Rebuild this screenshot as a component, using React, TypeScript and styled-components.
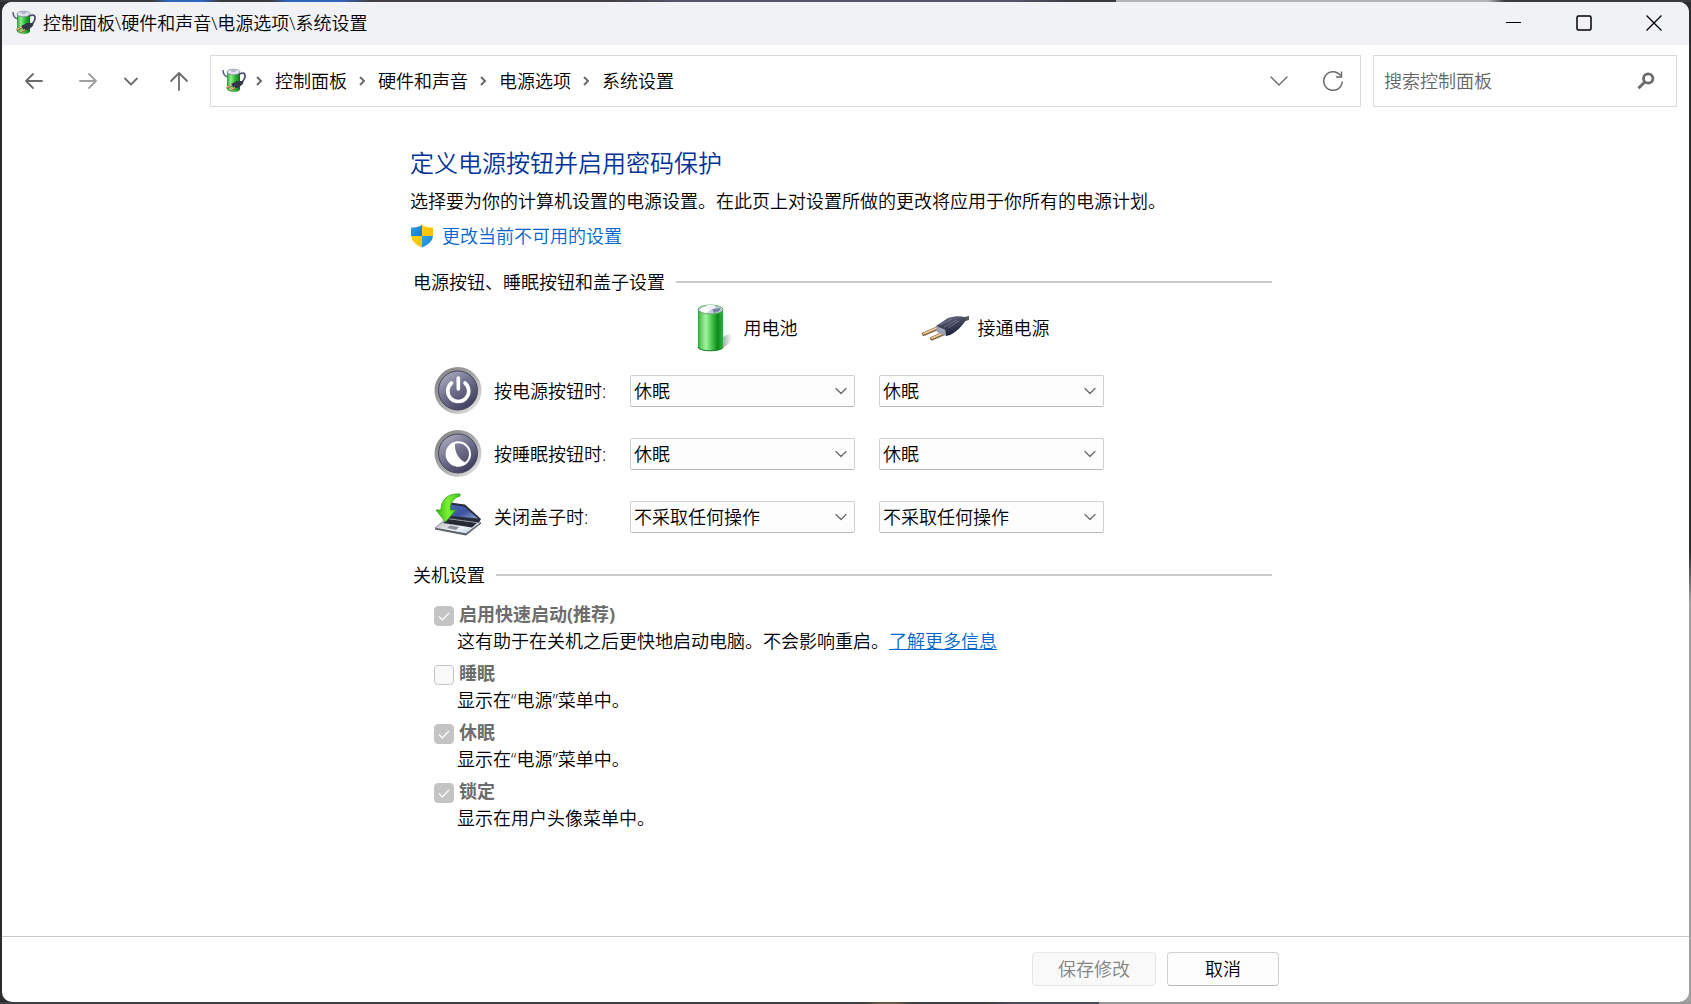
import React from "react";
import styled, { createGlobalStyle } from "styled-components";

const GlobalStyle = createGlobalStyle`
  *, *::before, *::after { box-sizing: border-box; }
  body {
    margin: 0;
    color: #000;
    font-family: "Open Sans", "Noto Sans CJK SC", sans-serif;
    font-size: 18px;
    font-weight: 350;
    line-height: 24px;
  }
  button, input, select { font: inherit; color: inherit; margin: 0; }
  h1, h2, p { margin: 0; font-weight: inherit; }
  svg { display: block; flex: none; }
`;

const Desktop = styled.div`
  display: flex;
  min-height: 100vh;
  padding: 2px;
  background:
    linear-gradient(90deg, #3a3b3d 0 9%, #2f65c0 10% 12%, #3a3b3d 13% 16%, #2f65c0 17% 20%, #443f42 22% 36%, #54546c 40% 60%, #3a3b3d 64% 66%, #b4b4b4 66% 88%, #3a3b3d 89%) top / 100% 2px no-repeat,
    linear-gradient(90deg, #3c3d3e 0 51%, #6a5846 52% 53%, #3c3d3e 54% 58%, #4a4c60 60% 65%, #989898 65%) bottom / 100% 2px no-repeat,
    linear-gradient(180deg, #2b2c2e 0 55%, #a0a0a0 60%) right / 16px 100% no-repeat,
    #2b2c2e;
`;

const Window = styled.div`
  flex: 1;
  min-width: 0;
  display: flex;
  flex-direction: column;
  overflow: hidden;
  border-radius: 10px;
  background: #fff;
`;

const TitleBar = styled.header`
  display: flex;
  align-items: center;
  height: 43px;
  padding: 0 0 2px 10px;
  background: #f1f2f5;
`;

const WindowTitle = styled.span`
  flex: 1;
  margin-left: 6px;
  line-height: 24px;
`;

const CaptionButton = styled.button`
  display: grid;
  place-items: center;
  width: 70px;
  height: 41px;
  padding: 0;
  border: 0;
  background: transparent;
`;

const NavBar = styled.nav`
  display: flex;
  align-items: center;
  padding: 10px 12px 0 8px;
`;

const NavButtons = styled.div`
  display: flex;
  gap: 6px;
  margin-right: 2px;
  align-items: center;
`;

const IconButton = styled.button<{ $w: number }>`
  display: grid;
  place-items: center;
  flex: none;
  width: ${(p) => p.$w}px;
  height: 40px;
  padding: 0;
  border: 0;
  background: transparent;
  color: #6b6b6b;
  &:disabled { color: #a0a0a0; }
`;

const AddressBar = styled.div`
  flex: 1;
  display: flex;
  align-items: center;
  height: 52px;
  padding: 0 0 0 11px;
  border: 1px solid #d9d9d9;
`;

const Crumbs = styled.ol`
  flex: 1;
  display: flex;
  margin: 0;
  padding: 0;
  list-style: none;
`;

const Crumb = styled.li`
  display: flex;
  align-items: center;
  gap: 12px;
  margin-left: 9px;
  & + & { margin-left: 12px; }
`;

const CrumbLink = styled.a`
  color: #000;
  text-decoration: none;
`;

const SearchBox = styled.div`
  display: flex;
  align-items: center;
  width: 304px;
  height: 52px;
  margin-left: 12px;
  padding: 0 8px 0 10px;
  border: 1px solid #d9d9d9;
`;

const SearchInput = styled.input`
  flex: 1;
  min-width: 0;
  padding: 0;
  border: 0;
  outline: 0;
  background: transparent;
  &::placeholder { color: #666; opacity: 1; }
`;

const Main = styled.main`
  flex: 1;
  width: 100%;
  max-width: 871px;
  margin: 0 auto;
  padding: 40px 9px 24px 0;
`;

const Heading = styled.h1`
  color: #003399;
  font-size: 24px;
  line-height: 32px;
`;

const Intro = styled.p`
  margin-top: 10px;
`;

const AdminLink = styled.a`
  display: flex;
  align-items: center;
  gap: 8px;
  width: fit-content;
  margin-top: 11px;
  color: #0066cc;
  text-decoration: none;
`;

const Section = styled.section`
  margin-top: 22px;
`;

const SectionTitle = styled.h2`
  display: flex;
  align-items: center;
  gap: 11px;
  padding-left: 3px;
  font-size: 18px;
  line-height: 24px;
  &::after {
    content: "";
    flex: 1;
    height: 2px;
    background: #c9c9c9;
  }
`;

const SourceHeader = styled.div`
  display: grid;
  grid-template-columns: 225px 225px;
  column-gap: 18px;
  margin: 10px 0 15px;
  padding-left: 220px;
`;

const Source = styled.div`
  display: flex;
  align-items: center;
  justify-content: center;
  gap: 8px;
`;

const ActionRows = styled.div`
  display: grid;
  row-gap: 15px;
  padding-left: 24px;
`;

const ActionRow = styled.div`
  display: grid;
  grid-template-columns: 48px 124px 225px 225px;
  column-gap: 12px;
  align-items: center;
`;

const SelectWrap = styled.div`
  display: grid;
  align-items: center;
  & > * { grid-area: 1 / 1; }
  & > svg { justify-self: end; margin-right: 8px; pointer-events: none; }
  & + & { margin-left: 12px; margin-right: -12px; }
`;

const Select = styled.select`
  appearance: none;
  width: 100%;
  height: 32px;
  padding: 0 28px 0 3px;
  border: 1px solid #d0d0d0;
  border-bottom-color: #b8b8b8;
  border-radius: 2px;
  background: #fdfdfd;
`;

const Options = styled.div`
  display: grid;
  row-gap: 8px;
  margin-top: 15px;
  padding-left: 24px;
`;

const OptionLine = styled.div`
  display: flex;
  align-items: flex-end;
  gap: 5px;
`;

const OptionLabel = styled.label`
  color: #6d6d6d;
  font-weight: 700;
`;

const OptionText = styled.p`
  margin-top: 3px;
  padding-left: 23px;
`;

const InlineLink = styled.a`
  color: #0066cc;
  text-decoration: underline;
`;

const CheckWrap = styled.span`
  display: grid;
  place-items: center;
  width: 20px;
  height: 20px;
  & > * { grid-area: 1 / 1; }
`;

const CheckInput = styled.input`
  appearance: none;
  width: 20px;
  height: 20px;
  border: 1px solid #c4c4c4;
  border-radius: 4px;
  background: #f9f9f9;
  &:checked { background: #c4c4c4; }
`;

const Footer = styled.footer`
  padding: 15px 0 16px;
  border-top: 1px solid #c8c8c8;
`;

const FooterInner = styled.div`
  display: flex;
  justify-content: flex-end;
  gap: 11px;
  width: 100%;
  max-width: 871px;
  margin: 0 auto;
  padding-right: 2px;
`;

const DialogButton = styled.button<{ $w: number }>`
  width: ${(p) => p.$w}px;
  height: 34px;
  padding: 0;
  border: 1px solid #d0d0d0;
  border-bottom-color: #b8b8b8;
  border-radius: 4px;
  background: #fdfdfd;
  &:disabled {
    border-color: #e6e6e6;
    background: #f9f9f9;
    color: #838383;
  }
`;

const PowerOptionsIcon = ({ id }: { id: string }) => (
  <svg width="25" height="26" viewBox="0 0 25 26" aria-hidden="true">
    <defs>
      <linearGradient id={id}>
        <stop offset="0" stopColor="#2f9a3c" />
        <stop offset=".3" stopColor="#8df08a" />
        <stop offset=".6" stopColor="#35bb3c" />
        <stop offset="1" stopColor="#0c7018" />
      </linearGradient>
    </defs>
    <path d="M18 6c3-2 5.500-1 5 3-.4 3-3 4-4 8" fill="none" stroke="#3f4568" strokeWidth="1.700" />
    <path d="M1 2c0 4 1 6 5 7" fill="none" stroke="#596079" strokeWidth="1.500" />
    <path d="M5 4v17c0 4 13 4 13 0V4z" fill={`url(#${id})`} />
    <ellipse cx="11.500" cy="4" rx="6.500" ry="2.800" fill="#dfe3ee" stroke="#77809a" strokeWidth=".7" />
    <ellipse cx="11.500" cy="3" rx="2.500" ry="1.200" fill="#b4b8cc" />
    <path d="M9 16l6-3 5 0 1.500 2-4.500 4.500-5 1z" fill="#34364a" />
    <path d="M4.500 20l5.500-2.500M8 22.500l5-2.500" stroke="#8b6736" strokeWidth="2.400" />
    <path d="M4.500 19.500L10 17M8 22l5-2.500" stroke="#ecd18c" strokeWidth="1" />
  </svg>
);

const CrumbSeparator = () => (
  <svg width="7" height="10" viewBox="0 0 7 10" fill="none" stroke="#6b6b6b" strokeWidth="2" aria-hidden="true">
    <path d="M1 1l4 4-4 4" />
  </svg>
);

const ArrowIcon = ({ d }: { d: string }) => (
  <svg width="20" height="20" viewBox="0 0 20 20" fill="none" stroke="currentColor" strokeWidth="1.800" strokeLinecap="round" strokeLinejoin="round" aria-hidden="true">
    <path d={d} />
  </svg>
);

const ShieldIcon = () => (
  <svg width="24" height="24" viewBox="0 0 24 24" aria-hidden="true">
    <defs>
      <clipPath id="shield">
        <path d="M12 1c3 2 7 2.500 11 2.500V11c0 6-5 10-11 12.500C6 21 1 17 1 11V3.500C5 3.500 9 3 12 1z" />
      </clipPath>
      <linearGradient id="shieldBlue" x1="0" y1="0" x2="1" y2="1">
        <stop offset="0" stopColor="#35a8e0" />
        <stop offset="1" stopColor="#0879d0" />
      </linearGradient>
      <linearGradient id="shieldGold" x1="0" y1="0" x2="1" y2="1">
        <stop offset="0" stopColor="#ffd400" />
        <stop offset="1" stopColor="#fdb913" />
      </linearGradient>
    </defs>
    <g clipPath="url(#shield)">
      <path d="M0 0h12v12H0z" fill="url(#shieldBlue)" />
      <path d="M12 0h12v12H12z" fill="url(#shieldGold)" />
      <path d="M0 12h12v12H0z" fill="url(#shieldGold)" />
      <path d="M12 12h12v12H12z" fill="url(#shieldBlue)" />
    </g>
  </svg>
);

const BatteryIcon = () => (
  <svg width="48" height="48" viewBox="0 0 48 48" aria-hidden="true">
    <defs>
      <linearGradient id="cell">
        <stop offset="0" stopColor="#2da338" />
        <stop offset=".12" stopColor="#5fd467" />
        <stop offset=".32" stopColor="#a4f3a2" />
        <stop offset=".52" stopColor="#52cf56" />
        <stop offset=".78" stopColor="#0d8a1c" />
        <stop offset="1" stopColor="#2fb038" />
      </linearGradient>
      <linearGradient id="cellShade">
        <stop offset="0" stopColor="#8c8c8c" />
        <stop offset="1" stopColor="#fff" />
      </linearGradient>
    </defs>
    <path d="M34 34c6-5 11-4 10 0-1 4-5 8-10 10z" fill="url(#cellShade)" opacity=".8" />
    <path d="M10 5v38c0 5 25 5 25 0V5z" fill="url(#cell)" />
    <path d="M10 43c0 5 25 5 25 0" fill="none" stroke="#117a1d" strokeWidth="1" />
    <ellipse cx="22.500" cy="5.500" rx="12.500" ry="4.500" fill="#c9cde0" stroke="#55b45d" strokeWidth="1" />
    <path d="M12 6c3-4 8-4 11-1l-4 4c-3 0-6-1-7-3z" fill="#fff" />
    <path d="M24 5l8-1c2 2-2 4-6 5z" fill="#7d83a5" />
    <ellipse cx="22.500" cy="3" rx="5" ry="2.300" fill="#f1f1f8" />
  </svg>
);

const PlugIcon = () => (
  <svg width="48" height="26" viewBox="0 0 48 26" aria-hidden="true">
    <defs>
      <linearGradient id="plugBody" x1="0" y1="0" x2=".4" y2="1">
        <stop offset="0" stopColor="#767b92" />
        <stop offset=".5" stopColor="#40435a" />
        <stop offset="1" stopColor="#20223a" />
      </linearGradient>
    </defs>
    <path d="M38 3l9-2v4l-7 2z" fill="#555" />
    <path d="M2 19l14-6M10 23.500l14-6" stroke="#8b6740" strokeWidth="4" strokeLinecap="round" />
    <path d="M2 18.500l14-6M10 23l14-6" stroke="#edcfa2" strokeWidth="1.800" strokeLinecap="round" />
    <path d="M14 11L26 3c6-2 12-2 17-1l1 3c-4 6-8 11-16 15l-4 1-1-6z" fill="url(#plugBody)" />
    <path d="M14 11l9 4 1 6-9-4z" fill="#9da1b8" />
    <path d="M18 10l12-6M22 12l13-7M26 13l11-7" stroke="#858aa0" strokeWidth=".7" />
  </svg>
);

const RoundButton = ({ id, children }: { id: string; children: React.ReactNode }) => (
  <svg width="48" height="48" viewBox="0 0 48 48" aria-hidden="true">
    <defs>
      <linearGradient id={`${id}Ring`} x1="0" y1="0" x2="1" y2="1">
        <stop offset=".1" stopColor="#858585" />
        <stop offset=".5" stopColor="#a9a9a9" />
        <stop offset=".9" stopColor="#e0e0e0" />
      </linearGradient>
      <linearGradient id={`${id}Face`} x1=".1" y1="0" x2=".8" y2="1">
        <stop offset="0" stopColor="#b4b5c6" />
        <stop offset=".45" stopColor="#72738f" />
        <stop offset="1" stopColor="#3a385b" />
      </linearGradient>
    </defs>
    <circle cx="24" cy="23.500" r="23.500" fill={`url(#${id}Ring)`} />
    <circle cx="24" cy="23.500" r="19.500" fill={`url(#${id}Face)`} stroke="#43445c" strokeWidth="1" />
    {children}
  </svg>
);

const PowerButtonIcon = () => (
  <RoundButton id="power">
    <path d="M17.500 16a10.500 10.500 0 1 0 13.500 0M24.300 11v11" fill="none" stroke="#fff" strokeWidth="3.600" strokeLinecap="round" />
  </RoundButton>
);

const SleepButtonIcon = () => (
  <RoundButton id="sleep">
    <circle cx="24.300" cy="24" r="11.700" fill="none" stroke="#fff" strokeWidth="2" />
    <path d="M21 12.500C20 21 24 29 32 33A12 12 0 1 1 21 12.500z" fill="#fff" />
  </RoundButton>
);

const LidIcon = () => (
  <svg width="48" height="48" viewBox="0 0 48 48" aria-hidden="true">
    <defs>
      <linearGradient id="lid" x1="0" y1="0" x2="1" y2="1">
        <stop offset="0" stopColor="#4664b8" />
        <stop offset=".55" stopColor="#3d559f" />
        <stop offset="1" stopColor="#8fa3d6" />
      </linearGradient>
      <linearGradient id="deck" x1="0" y1="0" x2="1" y2="1">
        <stop offset="0" stopColor="#aeb4bc" />
        <stop offset=".6" stopColor="#edf1f5" />
        <stop offset="1" stopColor="#9fc0da" />
      </linearGradient>
      <linearGradient id="arrow">
        <stop offset="0" stopColor="#2bbb12" />
        <stop offset=".5" stopColor="#7df032" />
        <stop offset="1" stopColor="#3fc51c" />
      </linearGradient>
    </defs>
    <path d="M1 35l12-10 34 5-15 11z" fill="url(#deck)" stroke="#777d85" strokeWidth=".8" />
    <path d="M1 35v1.500L32 42.500l15-12V29L32 40.500z" fill="#555c66" />
    <path d="M9 30l5-4 29 4-5 4.500z" fill="#252a35" />
    <path d="M16 32.500l9 1.500-3 3-9-2z" fill="#8a8f98" />
    <path d="M12 9l19 2.500L47 26l-2 3.500L13 25z" fill="#272c3c" />
    <path d="M15 11.500l15 2L44 25.500 17 23z" fill="url(#lid)" />
    <path d="M26 1C14 0 7 7 7 17H2l9.500 12L22 17h-5.500C16 10 19 5 26 3z" fill="url(#arrow)" stroke="#2a9b16" strokeWidth=".8" />
  </svg>
);

const SelectChevron = () => (
  <svg width="12" height="8" viewBox="0 0 12 8" fill="none" stroke="#666" strokeWidth="1.200" strokeLinecap="round" strokeLinejoin="round" aria-hidden="true">
    <path d="M1 1.500l5 5 5-5" />
  </svg>
);

const choices = ["不采取任何操作", "睡眠", "休眠", "关机"];

const ActionSelect = ({ label, value, id }: { label: string; value: string; id?: string }) => (
  <SelectWrap>
    <Select id={id} aria-label={label} defaultValue={value}>
      {choices.map((c) => (
        <option key={c}>{c}</option>
      ))}
    </Select>
    <SelectChevron />
  </SelectWrap>
);

const actions = [
  { id: "press-power", label: "按电源按钮时:", value: "休眠", icon: <PowerButtonIcon /> },
  { id: "press-sleep", label: "按睡眠按钮时:", value: "休眠", icon: <SleepButtonIcon /> },
  { id: "close-lid", label: "关闭盖子时:", value: "不采取任何操作", icon: <LidIcon /> },
];

const shutdownOptions = [
  { id: "fast", label: "启用快速启动(推荐)", text: "这有助于在关机之后更快地启动电脑。不会影响重启。", link: "了解更多信息", on: true },
  { id: "sleep", label: "睡眠", text: "显示在“电源”菜单中。", on: false },
  { id: "hibernate", label: "休眠", text: "显示在“电源”菜单中。", on: true },
  { id: "lock", label: "锁定", text: "显示在用户头像菜单中。", on: true },
];

const path = ["控制面板", "硬件和声音", "电源选项", "系统设置"];

export default function App() {
  return (
    <Desktop>
      <GlobalStyle />
      <Window>
        <TitleBar>
          <PowerOptionsIcon id="titleCell" />
          <WindowTitle>{path.join("\\")}</WindowTitle>
          <CaptionButton aria-label="最小化">
            <svg width="16" height="16" stroke="#000" aria-hidden="true"><path d="M0 7.500h15" /></svg>
          </CaptionButton>
          <CaptionButton aria-label="最大化">
            <svg width="16" height="16" fill="none" stroke="#000" strokeWidth="1.500" aria-hidden="true"><rect x="1" y="1" width="14" height="14" rx="1.500" /></svg>
          </CaptionButton>
          <CaptionButton aria-label="关闭">
            <svg width="16" height="16" stroke="#000" strokeWidth="1.300" aria-hidden="true"><path d="M.5.500l15 15M15.500.500l-15 15" /></svg>
          </CaptionButton>
        </TitleBar>

        <NavBar>
          <NavButtons>
            <IconButton $w={48} aria-label="后退"><ArrowIcon d="M18 10H2M9 3L2 10l7 7" /></IconButton>
            <IconButton $w={48} aria-label="前进" disabled><ArrowIcon d="M2 10h16M11 3l7 7-7 7" /></IconButton>
            <IconButton $w={26} aria-label="最近浏览的位置"><ArrowIcon d="M4 7.500l6 6 6-6" /></IconButton>
            <IconButton $w={58} aria-label="上一级"><ArrowIcon d="M10 19V2M2 10l8-8 8 8" /></IconButton>
          </NavButtons>
          <AddressBar>
            <PowerOptionsIcon id="addressCell" />
            <Crumbs>
              {path.map((name) => (
                <Crumb key={name}>
                  <CrumbSeparator />
                  <CrumbLink href="#">{name}</CrumbLink>
                </Crumb>
              ))}
            </Crumbs>
            <IconButton $w={54} aria-label="以前的位置">
              <svg width="18" height="10" viewBox="0 0 18 10" fill="none" stroke="currentColor" strokeWidth="1.400" strokeLinecap="round" aria-hidden="true"><path d="M1 1l8 8 8-8" /></svg>
            </IconButton>
            <IconButton $w={54} aria-label="刷新">
              <svg width="22" height="22" viewBox="0 0 22 22" fill="none" stroke="currentColor" strokeWidth="1.500" aria-hidden="true"><path d="M18.500 5.500A9.300 9.300 0 1 0 20.300 11.500M19.500 1.500V7H14" /></svg>
            </IconButton>
          </AddressBar>
          <SearchBox>
            <SearchInput type="text" aria-label="搜索控制面板" placeholder="搜索控制面板" />
            <IconButton $w={44} aria-label="搜索">
              <svg width="18" height="18" viewBox="0 0 18 18" fill="none" stroke="currentColor" strokeWidth="2.800" aria-hidden="true"><circle cx="11.200" cy="6.500" r="4.700" /><path d="M7.800 10L1.500 16.200" strokeWidth="3" /></svg>
            </IconButton>
          </SearchBox>
        </NavBar>

        <Main>
          <Heading>定义电源按钮并启用密码保护</Heading>
          <Intro>选择要为你的计算机设置的电源设置。在此页上对设置所做的更改将应用于你所有的电源计划。</Intro>
          <AdminLink href="#"><ShieldIcon />更改当前不可用的设置</AdminLink>

          <Section>
            <SectionTitle>电源按钮、睡眠按钮和盖子设置</SectionTitle>
            <SourceHeader>
              <Source><BatteryIcon />用电池</Source>
              <Source><PlugIcon />接通电源</Source>
            </SourceHeader>
            <ActionRows>
              {actions.map((a) => (
                <ActionRow key={a.id}>
                  {a.icon}
                  <label htmlFor={a.id}>{a.label}</label>
                  <ActionSelect id={a.id} label={`${a.label} 用电池`} value={a.value} />
                  <ActionSelect label={`${a.label} 接通电源`} value={a.value} />
                </ActionRow>
              ))}
            </ActionRows>
          </Section>

          <Section>
            <SectionTitle>关机设置</SectionTitle>
            <Options>
              {shutdownOptions.map((o) => (
                <div key={o.id}>
                  <OptionLine>
                    <CheckWrap>
                      <CheckInput type="checkbox" id={o.id} defaultChecked={o.on} disabled />
                      {o.on && (
                        <svg width="12" height="10" viewBox="0 0 12 10" fill="none" stroke="#fff" strokeWidth="1.200" aria-hidden="true"><path d="M1 5.500l3.300 3.300L11 2" /></svg>
                      )}
                    </CheckWrap>
                    <OptionLabel htmlFor={o.id}>{o.label}</OptionLabel>
                  </OptionLine>
                  <OptionText>
                    {o.text}
                    {o.link && <InlineLink href="#">{o.link}</InlineLink>}
                  </OptionText>
                </div>
              ))}
            </Options>
          </Section>
        </Main>

        <Footer>
          <FooterInner>
            <DialogButton $w={124} disabled>保存修改</DialogButton>
            <DialogButton $w={112}>取消</DialogButton>
          </FooterInner>
        </Footer>
      </Window>
    </Desktop>
  );
}
